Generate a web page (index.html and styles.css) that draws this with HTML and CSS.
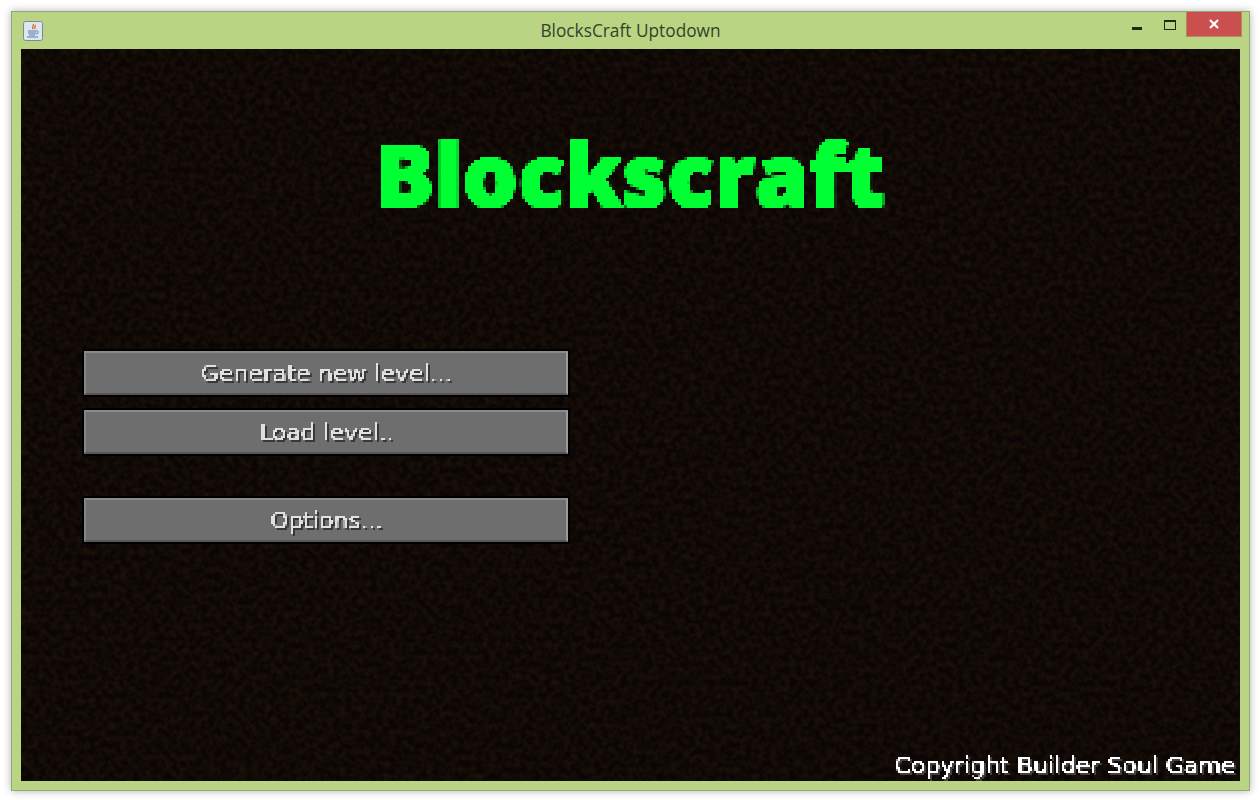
FILE: index.html
```html
<!DOCTYPE html>
<html lang="en">
<head>
    <meta charset="UTF-8">
    <title>BlocksCraft Uptodown</title>
    <link rel="stylesheet" href="styles.css">
</head>
<body>
    <!-- filters that snap the text to a coarse pixel grid -->
    <svg class="defs" width="0" height="0">
        <filter id="dirt" x="0" y="0" width="100%" height="100%" color-interpolation-filters="sRGB">
            <feTurbulence type="fractalNoise" baseFrequency="0.16" numOctaves="2" seed="7"/>
            <feColorMatrix values="0 0 0 0 0.13  0 0 0 0 0.08  0 0 0 0 0.04  1.6 0 0 0 -0.55"/>
        </filter>
        <filter id="pixel3" x="-2%" y="-10%" width="104%" height="120%" color-interpolation-filters="sRGB">
            <feMorphology in="SourceGraphic" operator="dilate" radius="1" result="fat"/>
            <feFlood x="1" y="1" width="1" height="1"/>
            <feComposite width="3" height="3"/>
            <feTile result="grid"/>
            <feComposite in="fat" in2="grid" operator="in"/>
            <feMorphology operator="dilate" radius="1"/>
        </filter>
        <filter id="pixel2" x="-2%" y="-10%" width="104%" height="120%" color-interpolation-filters="sRGB">
            <feFlood x="0" y="0" width="1" height="1"/>
            <feComposite width="2" height="2"/>
            <feTile result="grid"/>
            <feComposite in="SourceGraphic" in2="grid" operator="in"/>
            <feComponentTransfer>
                <feFuncA type="linear" slope="5" intercept="-0.9"/>
            </feComponentTransfer>
            <feConvolveMatrix order="2" kernelMatrix="1 1 1 1" divisor="1" preserveAlpha="false" result="txt"/>
            <feOffset dx="2" dy="2" result="off"/>
            <feColorMatrix in="off" values="0.25 0 0 0 0  0 0.25 0 0 0  0 0 0.25 0 0  0 0 0 1 0" result="shade"/>
            <feMerge>
                <feMergeNode in="shade"/>
                <feMergeNode in="txt"/>
            </feMerge>
        </filter>
    </svg>

    <div class="window">
        <div class="titlebar">
            <span class="appIcon">
                <svg width="20" height="20" viewBox="0 0 20 20">
                    <rect x="0.5" y="0.5" width="19" height="19" rx="2" fill="#dfe6ee" stroke="#7d8a94"/>
                    <path d="M10 3c2 2-2 3 0 5M12 4c1 1-1 2 0 4" fill="none" stroke="#d8642a" stroke-width="1.3"/>
                    <path d="M5 10h8M5 12h8M6 14h6" stroke="#4f7fb0" stroke-width="1.2"/>
                    <path d="M13 10c3-1 3 3 0 3" fill="none" stroke="#4f7fb0"/>
                    <path d="M4 16h11" stroke="#4f7fb0"/>
                </svg>
            </span>
            <span class="title">BlocksCraft Uptodown</span>
            <div class="controls">
                <span class="minBtn"></span>
                <span class="maxBtn"></span>
                <span class="closeBtn">
                    <svg width="12" height="12" viewBox="0 0 12 12">
                        <path d="M2 2l8 8M10 2l-8 8" stroke="#fff" stroke-width="2.2"/>
                    </svg>
                </span>
            </div>
        </div>
        <div class="game">
            <svg class="dirt"><rect width="100%" height="100%" filter="url(#dirt)"/></svg>
            <h1 class="logo">Blockscraft</h1>
            <div class="menu">
                <button class="btn"><span class="btnText">Generate new level...</span></button>
                <button class="btn"><span class="btnText">Load level..</span></button>
                <button class="btn btnOptions"><span class="btnText">Options...</span></button>
            </div>
            <div class="copyright">Copyright Builder Soul Game</div>
        </div>
    </div>
</body>
</html>
```

FILE: styles.css
```css
*{
    margin: 0;
    padding: 0;
    box-sizing: border-box;
}
html, body{
    width: 1260px;
    height: 800px;
    overflow: hidden;
    background: #fff;
}
body{
    padding: 11px 10px 9px 11px;
    font-family: "Open Sans", sans-serif;
}
.defs{
    position: absolute;
}
.window{
    height: 100%;
    display: flex;
    flex-direction: column;
    padding: 0 9px 9px 9px;
    background: #b9d584;
    border: 1px solid #93a872;
    box-shadow: 0 0 8px rgba(0,0,0,0.3);
}
.titlebar{
    height: 37px;
    flex: none;
    display: flex;
    align-items: center;
    position: relative;
}
.appIcon{
    width: 20px;
    height: 20px;
    margin: 1px 0 0 2px;
    display: flex;
}
.title{
    position: absolute;
    left: 0;
    right: 0;
    text-align: center;
    font-size: 17.3px;
    color: #36412a;
    margin-top: -1px;
}
.controls{
    margin-left: auto;
    margin-right: -2px;
    align-self: flex-start;
    display: flex;
}
.minBtn{
    width: 10px;
    height: 3px;
    background: #1f2a14;
    margin: 15px 0 0 0;
}
.maxBtn{
    width: 12px;
    height: 10px;
    border: 1px solid #1f2a14;
    border-top-width: 2px;
    margin: 8px 10px 0 22px;
}
.closeBtn{
    width: 56px;
    height: 25px;
    background: #c9504f;
    border: 1px solid #b98a5a;
    border-top: 0;
    display: flex;
    align-items: center;
    justify-content: center;
}
.game{
    flex: 1;
    position: relative;
    background: #0b0604;
    overflow: hidden;
}
.dirt{
    position: absolute;
    left: 0;
    top: 0;
    width: 100%;
    height: 100%;
}
.logo{
    position: absolute;
    top: 69px;
    left: 0;
    width: 100%;
    text-align: center;
    font-family: "Open Sans", sans-serif;
    font-weight: 800;
    font-size: 87px;
    line-height: 110px;
    color: #00ff33;
    filter: url(#pixel3);
}
.menu{
    position: relative;
    width: 484px;
    margin: 302px 0 0 63px;
    display: flex;
    flex-direction: column;
    gap: 15px;
}
.btn{
    height: 44px;
    background: #6e6e6e;
    border: 2px solid;
    border-color: #8a8a8a #9b9b9b #565656 #858585;
    outline: 2px solid #000;
    font-family: "DejaVu Sans", sans-serif;
    font-size: 23.5px;
    color: #e0e0e0;
}
.btnText{
    display: inline-block;
    filter: url(#pixel2);
}
.btnOptions{
    margin-top: 29px;
}
.copyright{
    position: absolute;
    right: 5px;
    bottom: 2px;
    font-family: "DejaVu Sans", sans-serif;
    font-size: 23.5px;
    color: #fff;
    filter: url(#pixel2);
}
```
